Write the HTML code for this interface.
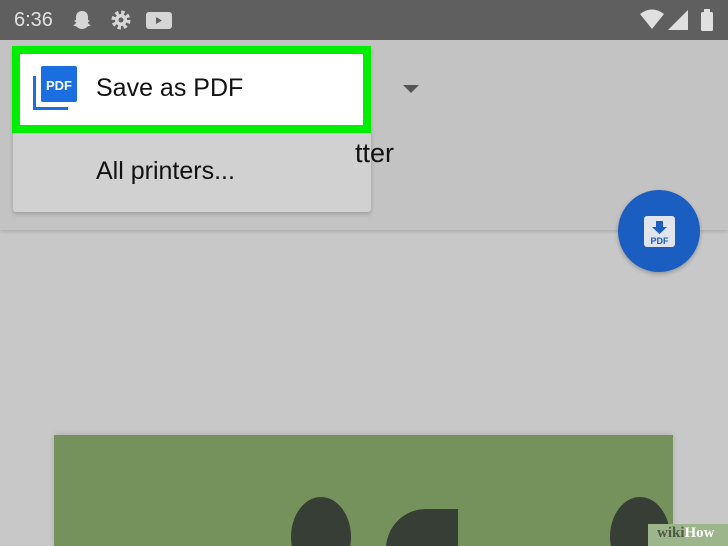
<!DOCTYPE html><html style="overflow:hidden"><head><style>
body{margin:0;width:728px;height:546px;overflow:hidden;background:#c8c8c8;font-family:"Liberation Sans",sans-serif;position:relative}
.a{position:absolute}
</style></head><body>
<div class="a" style="left:0;top:0;width:728px;height:40px;background:#5f5f5f"></div>
<div class="a" style="left:14px;top:9px;color:#e0e0e0;font-size:20px">6:36</div>
<svg class="a" style="left:70px;top:8px" width="110" height="24">
<path d="M12 3c4 0 6 3 6 6v3l2 1-2 1c0 2 2 3 3 3-1 1-3 1-4 2-1 1-3 2-5 2s-4-1-5-2c-1-1-3-1-4-2 1 0 3-1 3-3l-2-1 2-1V9c0-3 2-6 6-6z" fill="#d6d6d6"/>
<circle cx="51" cy="12" r="7" fill="none" stroke="#d6d6d6" stroke-width="5" stroke-dasharray="3 2.5"/><circle cx="51" cy="12" r="6" fill="#d6d6d6"/><circle cx="51" cy="12" r="2.5" fill="#5f5f5f"/>
<rect x="76" y="4" width="26" height="17" rx="3" fill="#d6d6d6"/><path d="M86 9l6 3.5-6 3.5z" fill="#5f5f5f"/></svg>
<svg class="a" style="left:638px;top:8px" width="85" height="26">
<path d="M2 6q12-9 24 0l-12 15z" fill="#e0e0e0"/><path d="M30 22l20-20v20z" fill="#e0e0e0"/>
<rect x="63" y="4" width="12" height="19" rx="1.5" fill="#e0e0e0"/><rect x="66" y="1" width="6" height="4" fill="#e0e0e0"/></svg>
<div class="a" style="left:0;top:40px;width:728px;height:190px;background:#c3c3c3;box-shadow:0 2px 3px rgba(0,0,0,.12)"></div>
<div class="a" style="left:403px;top:85px;width:0;height:0;border-left:8px solid transparent;border-right:8px solid transparent;border-top:8px solid #555"></div>
<div class="a" style="left:13px;top:46px;width:358px;height:166px;background:#d1d1d1;border-radius:3px;box-shadow:0 2px 4px rgba(0,0,0,.2)"></div>
<div class="a" style="left:355px;top:138px;font-size:27px;color:#111">tter</div>
<div class="a" style="left:12px;top:46px;width:343px;height:71px;border:8px solid #00ee00;background:#fff"></div>
<svg class="a" style="left:31px;top:65px" width="48" height="48"><path d="M2 11v34h35v-3H5V11z" fill="#1a6ee0"/><rect x="10" y="1" width="36" height="36" rx="2" fill="#1a6ee0"/><text x="28" y="25" font-size="13" font-weight="bold" fill="#fff" text-anchor="middle" font-family="Liberation Sans">PDF</text></svg>
<div class="a" style="left:96px;top:74px;font-size:25px;color:#111">Save as PDF</div>
<div class="a" style="left:96px;top:157px;font-size:25px;color:#111">All printers...</div>
<div class="a" style="left:618px;top:190px;width:82px;height:82px;border-radius:50%;background:#1a5ec2;box-shadow:0 2px 4px rgba(0,0,0,.25)"></div>
<svg class="a" style="left:643px;top:215px" width="33" height="33"><rect x="1" y="1" width="31" height="31" rx="3" fill="#e0e4ec"/><path d="M13 6h7v6h4l-7.5 7-7.5-7h4z" fill="#1a5ec2"/><text x="16.5" y="29" font-size="9" font-weight="bold" fill="#1a5ec2" text-anchor="middle" font-family="Liberation Sans">PDF</text></svg>
<div class="a" style="left:54px;top:435px;width:619px;height:111px;background:#75925c;overflow:hidden;box-shadow:0 0 6px rgba(0,0,0,.15)">
<div class="a" style="left:237px;top:62px;width:60px;height:80px;border-radius:50%;background:#363e36"></div>
<div class="a" style="left:332px;top:74px;width:72px;height:60px;background:#363e36;border-radius:40px 0 0 0"></div>
<div class="a" style="left:556px;top:62px;width:60px;height:80px;border-radius:50%;background:#363e36"></div>
</div>
<div class="a" style="left:648px;top:524px;width:80px;height:22px;background:#9cb58a;overflow:hidden"><div class="a" style="left:9px;top:1px;font-family:'Liberation Serif',serif;font-weight:bold;font-size:15px;color:#fff;white-space:nowrap"><span style="color:#4d5a44">wiki</span>How</div></div>
</body></html>
